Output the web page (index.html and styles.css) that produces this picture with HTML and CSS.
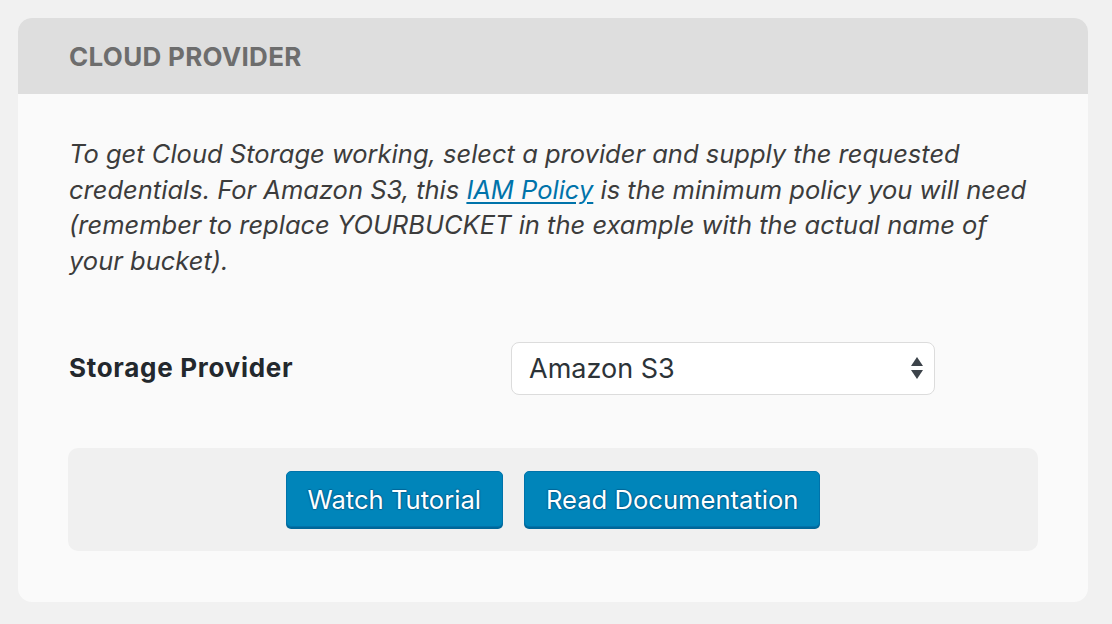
FILE: index.html
```html
<!DOCTYPE html>
<html>
<head>
<meta charset="utf-8">
<link rel="stylesheet" href="styles.css">
</head>
<body>
<div class="card">
  <div class="card-header">
    <h2 class="card-title">CLOUD PROVIDER</h2>
  </div>
  <div class="card-body">
    <p class="intro">To get Cloud Storage working, select a provider and supply the requested<br>credentials. For Amazon S3, this <a href="#" class="link">IAM Policy</a> is the minimum policy you will need<br>(remember to replace YOURBUCKET in the example with the actual name of<br>your bucket).</p>
    <div class="field-row">
      <label class="field-label">Storage Provider</label>
      <div class="select">
        <span class="select-value">Amazon S3</span>
        <svg class="select-arrows" width="14" height="24" viewBox="0 0 14 24"><path d="M7 1 L13 10 L1 10 Z" fill="#3c434a"/><path d="M1 14 L13 14 L7 23 Z" fill="#3c434a"/></svg>
      </div>
    </div>
    <div class="actions">
      <a href="#" class="btn">Watch Tutorial</a>
      <a href="#" class="btn">Read Documentation</a>
    </div>
  </div>
</div>
</body>
</html>
```

FILE: styles.css
```css
html, body {
  margin: 0;
  padding: 0;
  background: #f1f1f1;
}
body {
  padding: 18px 24px 22px 18px;
  font-family: Inter, "Liberation Sans", sans-serif;
}
.card {
  background: #fafafa;
  border-radius: 14px;
  overflow: hidden;
  width: 1070px;
}
.card-header {
  background: #dedede;
  height: 76px;
  display: flex;
  align-items: center;
  padding-left: 51px;
}
.card-title {
  margin: 0;
  font-size: 26px;
  font-weight: 700;
  color: #6d6d6d;
  letter-spacing: 0.3px;
}
.card-body {
  padding: 42px 50px 51px 50px;
}
.intro {
  margin: 0 0 0 1px;
  font-style: italic;
  font-size: 25.5px;
  line-height: 35.7px;
  color: #3c3c3c;
}
.link {
  color: #0073aa;
  text-decoration: underline;
  text-underline-offset: 3px;
}
.field-row {
  display: flex;
  align-items: center;
  margin-top: 63px;
}
.field-label {
  width: 442px;
  font-size: 26px;
  font-weight: 700;
  color: #23282d;
  padding-left: 1px;
  margin-top: -2px;
  letter-spacing: 0.7px;
}
.select {
  height: 51px;
  background: #fff;
  border: 1px solid #dcdcdc;
  border-radius: 8px;
  display: flex;
  align-items: center;
  justify-content: space-between;
  padding: 0 10px 0 17px;
  box-sizing: content-box;
  width: 395px;
}
.select-value {
  font-size: 27px;
  color: #2c3338;
}
.select-arrows {
  display: block;
}
.actions {
  margin-top: 53px;
  background: #f0f0f0;
  border-radius: 10px;
  height: 103px;
  display: flex;
  align-items: center;
  justify-content: center;
  gap: 21px;
}
.btn {
  display: flex;
  align-items: center;
  height: 54px;
  padding: 0 21px;
  background: #0085ba;
  border: 1px solid #0073aa;
  border-radius: 5px;
  box-shadow: 0 2px 0 #006799;
  color: #fff;
  font-size: 25.6px;
  text-decoration: none;
  text-shadow: 0 -1px 1px #006799, 1px 0 1px #006799, 0 1px 1px #006799, -1px 0 1px #006799;
}
```
